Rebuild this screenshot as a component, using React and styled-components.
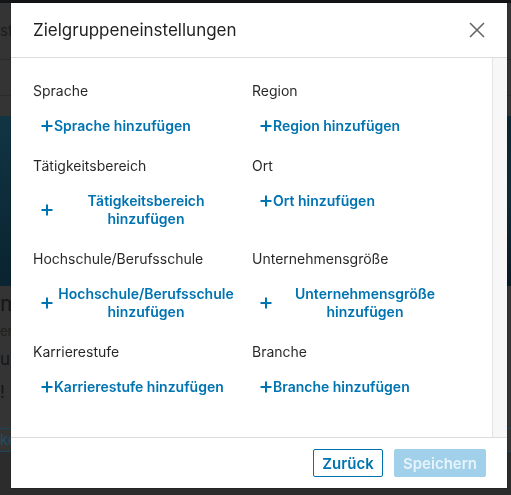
import React from "react";
import styled, { createGlobalStyle } from "styled-components";

const Global = createGlobalStyle`
  html, body { margin: 0; padding: 0; }
  body {
    width: 511px;
    height: 495px;
    overflow: hidden;
    background: #2e2e2e;
    font-family: Inter, "Open Sans", "Liberation Sans", sans-serif;
    -webkit-font-smoothing: antialiased;
  }
`;

/* ---------- dimmed page behind the modal ---------- */
const Page = styled.div`
  display: flex;
  flex-direction: column;
  height: 495px;
  background: #333333;
`;
const TopBar = styled.div`
  height: 3px;
  background: #121416;
`;
const PageBand = styled.div`
  height: ${(p) => p.$h}px;
  background: ${(p) => p.$bg || "#343434"};
  border-bottom: 1px solid ${(p) => p.$line || "transparent"};
  color: ${(p) => p.$color || "#1c1c1c"};
  font-size: ${(p) => p.$fs || 14}px;
  line-height: ${(p) => p.$h}px;
  white-space: nowrap;
  overflow: hidden;
`;
const PageImage = styled.div`
  height: 170px;
  background: linear-gradient(160deg, #123544 0%, #0a2431 45%, #0e2c3a 75%, #081a24 100%);
`;
const PageFill = styled.div`
  flex: 1;
  background: #2c2c2c;
`;

/* ---------- modal ---------- */
const Modal = styled.div`
  position: fixed;
  left: 11px;
  top: 3px;
  width: 496px;
  height: 485px;
  background: #ffffff;
  display: flex;
  flex-direction: column;
  box-shadow: 0 0 0 1px rgba(0, 0, 0, 0.15);
`;
const Header = styled.header`
  height: 54px;
  flex: none;
  display: flex;
  align-items: center;
  justify-content: space-between;
  padding: 0 20px 0 22px;
  border-bottom: 1px solid #dcdcdc;
`;
const Title = styled.h2`
  margin: 0;
  font-size: 17px;
  font-weight: 400;
  color: rgba(0, 0, 0, 0.88);
`;
const CloseButton = styled.button`
  width: 20px;
  height: 20px;
  padding: 0;
  border: 0;
  background: none;
  display: flex;
  align-items: center;
  justify-content: center;
  cursor: pointer;
`;
const BodyRow = styled.div`
  flex: 1;
  display: flex;
  min-height: 0;
`;
const Content = styled.div`
  flex: 1;
  padding: 23px 22px 0 22px;
`;
const Track = styled.div`
  width: 14px;
  flex: none;
  border-left: 1px solid #e4e4e4;
  background: #f7f7f7;
`;
const Grid = styled.div`
  display: grid;
  grid-template-columns: 205px 205px;
  column-gap: 14px;
  row-gap: 14px;
  align-items: start;
`;
const Field = styled.div`
  display: flex;
  flex-direction: column;
  gap: 9px;
`;
const Label = styled.div`
  font-size: 14px;
  line-height: 20px;
  color: rgba(0, 0, 0, 0.85);
`;
const AddButton = styled.button`
  display: flex;
  align-items: center;
  width: 100%;
  padding: 7px 0 7px 8px;
  border: 0;
  background: none;
  color: #0073b1;
  font-family: inherit;
  font-size: 14px;
  font-weight: 600;
  line-height: 18px;
  cursor: pointer;
  text-align: ${(p) => (p.$wrap ? "center" : "left")};
`;
const PlusIcon = styled.svg`
  flex: none;
  width: 12px;
  height: 12px;
  margin-right: 1px;
`;
const AddText = styled.span`
  flex: ${(p) => (p.$wrap ? 1 : "none")};
`;
const Footer = styled.footer`
  height: 50px;
  flex: none;
  border-top: 1px solid #dcdcdc;
  display: flex;
  align-items: center;
  justify-content: flex-end;
  gap: 11px;
  padding: 0 21px 0 0;
`;
const FooterButton = styled.button`
  height: 28px;
  width: ${(p) => p.$w}px;
  border-radius: 2px;
  font-family: inherit;
  font-size: 15px;
  font-weight: 600;
  padding: 0;
  cursor: pointer;
  border: 1px solid ${(p) => (p.$primary ? "#a0d0ea" : "#0073b1")};
  background: ${(p) => (p.$primary ? "#a0d0ea" : "#ffffff")};
  color: ${(p) => (p.$primary ? "rgba(255,255,255,0.75)" : "#0073b1")};
`;

const fields = [
  ["Sprache", "Sprache hinzufügen", false],
  ["Region", "Region hinzufügen", false],
  ["Tätigkeitsbereich", "Tätigkeitsbereich hinzufügen", true],
  ["Ort", "Ort hinzufügen", false],
  ["Hochschule/Berufsschule", "Hochschule/Berufsschule hinzufügen", true],
  ["Unternehmensgröße", "Unternehmensgröße hinzufügen", true],
  ["Karrierestufe", "Karrierestufe hinzufügen", false],
  ["Branche", "Branche hinzufügen", false],
];

const Plus = () => (
  <PlusIcon viewBox="0 0 12 12">
    <path d="M6 0.5v11M0.5 6h11" stroke="#0073b1" strokeWidth="2" fill="none" />
  </PlusIcon>
);

export default function App() {
  return (
    <>
      <Global />
      <Page>
        <TopBar />
        <PageBand $h={56} $line="#2b2b2b" $fs={15}>str</PageBand>
        <PageBand $h={35} $line="#2b2b2b" />
        <PageBand $h={19} />
        <PageImage />
        <PageBand $h={34} $fs={22} $color="#161616">m</PageBand>
        <PageBand $h={20} $fs={13} $color="#202020">en</PageBand>
        <PageBand $h={34} $fs={17} $color="#161616"> u</PageBand>
        <PageBand $h={30} $fs={17} $color="#161616">!</PageBand>
        <PageBand $h={20} $line="#1c4457" />
        <PageBand $h={22} $line="#1c4457" $fs={15} $color="#1d4f68">ke</PageBand>
        <PageFill />
      </Page>
      <Modal role="dialog" aria-label="Zielgruppeneinstellungen">
        <Header>
          <Title>Zielgruppeneinstellungen</Title>
          <CloseButton aria-label="Schließen">
            <svg width="16" height="16" viewBox="0 0 16 16">
              <path d="M1 1L15 15M15 1L1 15" stroke="#666" strokeWidth="1.6" fill="none" />
            </svg>
          </CloseButton>
        </Header>
        <BodyRow>
          <Content>
            <Grid>
              {fields.map(([label, action, wrap]) => (
                <Field key={label}>
                  <Label>{label}</Label>
                  <AddButton $wrap={wrap}>
                    <Plus />
                    <AddText $wrap={wrap}>{action}</AddText>
                  </AddButton>
                </Field>
              ))}
            </Grid>
          </Content>
          <Track />
        </BodyRow>
        <Footer>
          <FooterButton $w={70}>Zurück</FooterButton>
          <FooterButton $w={92} $primary disabled>Speichern</FooterButton>
        </Footer>
      </Modal>
    </>
  );
}
